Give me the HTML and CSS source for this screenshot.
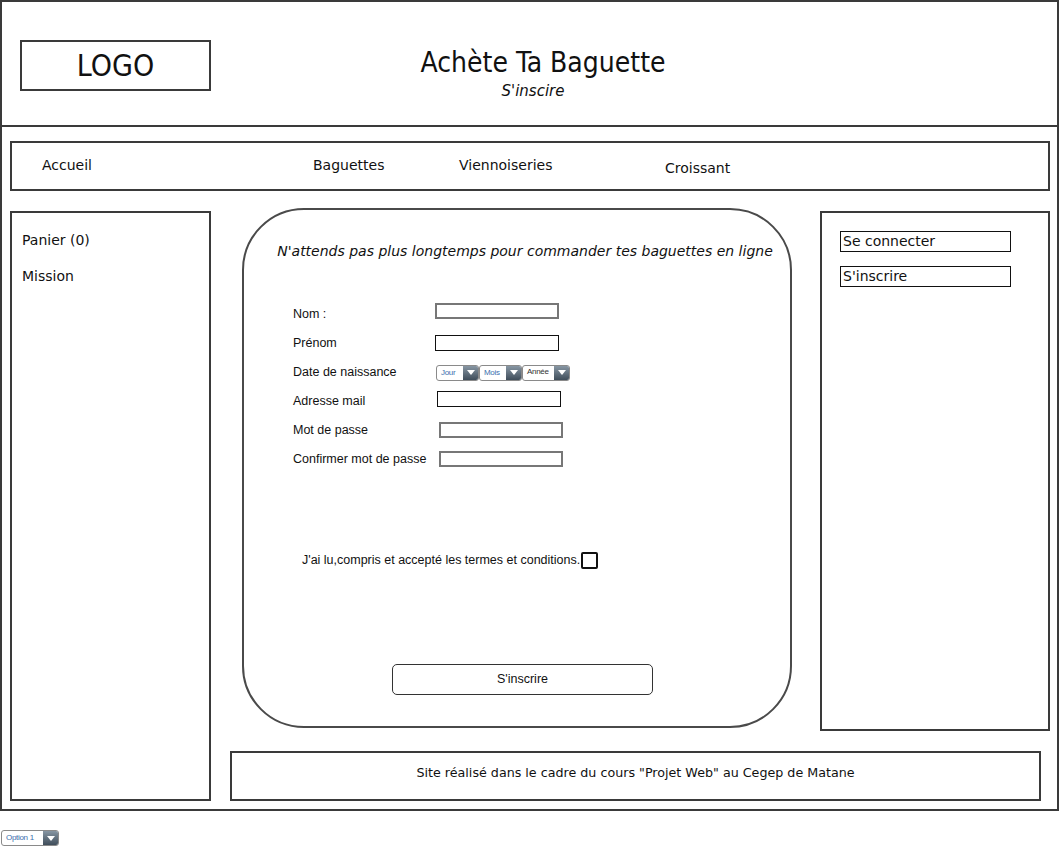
FILE: index.html
```html
<!DOCTYPE html>
<html lang="fr">
<head>
    <meta charset="UTF-8">
    <title>Achète Ta Baguette - S'inscrire</title>
    <link rel="stylesheet" href="styles.css">
</head>
<body>
    <div class="frame">
        <header class="header">
            <div class="logo">LOGO</div>
            <div class="title-block">
                <h1>Achète Ta Baguette</h1>
                <p class="subtitle">S'inscire</p>
            </div>
        </header>

        <nav class="nav">
            <a href="#">Accueil</a>
            <a href="#">Baguettes</a>
            <a href="#">Viennoiseries</a>
            <a href="#" class="low">Croissant</a>
        </nav>

        <div class="main">
            <aside class="side-left">
                <a href="#">Panier (0)</a>
                <a href="#">Mission</a>
            </aside>

            <div class="content">
                <div class="content-row">
                    <section class="panel">
                        <p class="intro">N'attends pas plus longtemps pour commander tes baguettes en ligne</p>

                        <form class="signup">
                            <label>Nom :</label>
                            <input type="text" class="field field-grey up4">

                            <label>Prénom</label>
                            <input type="text" class="field">

                            <label>Date de naissance</label>
                            <div class="dates">
                                <span class="select w43"><span class="val">Jour</span><span class="arrow"></span></span>
                                <span class="select w43"><span class="val">Mois</span><span class="arrow"></span></span>
                                <span class="select w48"><span class="val dark">Année</span><span class="arrow"></span></span>
                            </div>

                            <label>Adresse mail</label>
                            <input type="email" class="field shift1 up5">

                            <label>Mot de passe</label>
                            <input type="password" class="field field-grey shift2">

                            <label>Confirmer mot de passe</label>
                            <input type="password" class="field field-grey shift2">
                        </form>

                        <div class="terms">
                            <span>J'ai lu,compris et accepté les termes et conditions.</span>
                            <span class="check"></span>
                        </div>

                        <button type="button" class="btn-submit">S'inscrire</button>
                    </section>

                    <aside class="side-right">
                        <a href="#" class="box-link">Se connecter</a>
                        <a href="#" class="box-link">S'inscrire</a>
                    </aside>
                </div>

                <footer class="footer">
                    Site réalisé dans le cadre du cours "Projet Web" au Cegep de Matane
                </footer>
            </div>
        </div>
    </div>

    <span class="select option"><span class="val">Option 1</span><span class="arrow"></span></span>
</body>
</html>
```

FILE: styles.css
```css
body {
    margin: 0;
    font-family: "DejaVu Sans", Verdana, sans-serif;
    color: #111;
    background: white;
}
a { color: #111; text-decoration: none; }

.frame {
    width: 1059px;
    height: 811px;
    box-sizing: border-box;
    border: 2px solid #3a3a3a;
}

/* header */
.header {
    display: flex;
    height: 125px;
    box-sizing: border-box;
    border-bottom: 2px solid #3a3a3a;
    padding: 38px 0 0 18px;
}
.logo {
    width: 191px;
    height: 51px;
    box-sizing: border-box;
    border: 2px solid #3a3a3a;
    font-family: "DejaVu Sans Condensed", "DejaVu Sans", sans-serif;
    font-size: 30px;
    text-align: center;
    line-height: 47px;
}
.title-block {
    width: 400px;
    margin-left: 132px;
    text-align: center;
}
h1 {
    margin: 7px 0 0;
    font-family: "DejaVu Sans Condensed", "DejaVu Sans", sans-serif;
    font-size: 28px;
    font-weight: normal;
    line-height: 32px;
}
.subtitle {
    margin: 3px 20px 0 0;
    font-size: 15px;
    font-style: italic;
    line-height: 18px;
}

/* navigation */
.nav {
    display: grid;
    grid-template-columns: 271px 146px 206px 1fr;
    align-items: center;
    width: 1040px;
    height: 50px;
    box-sizing: border-box;
    margin: 14px 0 0 8px;
    padding: 0 0 2px 30px;
    border: 2px solid #3a3a3a;
    font-size: 14px;
}
.nav .low { margin-top: 5px; }

/* main */
.main {
    display: grid;
    grid-template-columns: 201px 1fr;
    column-gap: 19px;
    margin-top: 20px;
    padding-left: 8px;
}
.side-left {
    height: 590px;
    box-sizing: border-box;
    border: 2px solid #3a3a3a;
    padding: 18px 10px;
    display: flex;
    flex-direction: column;
    gap: 18px;
    font-size: 14px;
    line-height: 18px;
}

.content-row {
    display: flex;
    align-items: flex-start;
}
.panel {
    width: 550px;
    height: 520px;
    box-sizing: border-box;
    margin: -3px 0 0 12px;
    border: 2px solid #4a4a4a;
    border-radius: 62px;
    padding: 32px 0 0;
}
.intro {
    margin: 0;
    padding-left: 16px;
    text-align: center;
    font-size: 14px;
    font-style: italic;
    line-height: 18px;
}

.signup {
    display: grid;
    grid-template-columns: 142px 1fr;
    grid-auto-rows: 29px;
    align-items: center;
    margin: 39px 0 0 49px;
    font-family: "Liberation Sans", Arial, sans-serif;
    font-size: 12.5px;
}
.field {
    width: 124px;
    height: 16px;
    box-sizing: border-box;
    border: 1px solid #111;
    margin: 0;
    padding: 0;
}
.field-grey { border: 2px solid #777; }
.field.shift1 { margin-left: 2px; }
.field.shift2 { margin-left: 4px; }
.field.up4 { align-self: start; margin-top: 4px; }
.field.up5 { align-self: start; margin-top: 5px; }

.dates {
    display: flex;
    margin-left: 1px;
    padding-top: 2px;
}
.select {
    display: inline-flex;
    height: 16px;
    box-sizing: border-box;
    border: 1px solid #8a8a8a;
    border-radius: 3px;
    background: white;
    overflow: hidden;
    font-family: "Liberation Sans", Arial, sans-serif;
}
.w43 { width: 43px; }
.w48 { width: 48px; }
.select .val {
    flex: 1;
    padding-left: 4px;
    font-size: 8px;
    line-height: 14px;
    color: #3d6fae;
    letter-spacing: -0.3px;
}
.select .val.dark { color: #333; line-height: 12px; }
.select .arrow {
    width: 15px;
    background: linear-gradient(#8796a3, #3f4d5a);
    display: flex;
    align-items: center;
    justify-content: center;
}
.select .arrow::after {
    content: "";
    border-left: 4px solid transparent;
    border-right: 4px solid transparent;
    border-top: 5px solid white;
}

.terms {
    display: flex;
    align-items: center;
    gap: 1px;
    margin: 78px 0 0 58px;
    font-family: "Liberation Sans", Arial, sans-serif;
    font-size: 12.5px;
    height: 18px;
}
.check {
    width: 17px;
    height: 17px;
    box-sizing: border-box;
    border: 2px solid #111;
    border-radius: 2px;
}

.btn-submit {
    display: block;
    width: 261px;
    height: 31px;
    margin: 95px 0 0 148px;
    padding-bottom: 3px;
    border: 1px solid #333;
    border-radius: 5px;
    background: white;
    font-family: "Liberation Sans", Arial, sans-serif;
    font-size: 12.5px;
    color: #111;
}

.side-right {
    width: 230px;
    height: 520px;
    box-sizing: border-box;
    margin-left: 28px;
    border: 2px solid #3a3a3a;
    padding: 18px 0 0 18px;
    display: flex;
    flex-direction: column;
    gap: 14px;
}
.box-link {
    width: 171px;
    height: 21px;
    box-sizing: border-box;
    border: 1px solid #111;
    padding-left: 2px;
    font-size: 14px;
    line-height: 19px;
}

.footer {
    width: 811px;
    height: 50px;
    box-sizing: border-box;
    margin-top: 20px;
    padding-bottom: 7px;
    border: 2px solid #3a3a3a;
    display: flex;
    align-items: center;
    justify-content: center;
    font-size: 12.7px;
}

.option {
    width: 58px;
    margin: 19px 0 0 1px;
}
```
